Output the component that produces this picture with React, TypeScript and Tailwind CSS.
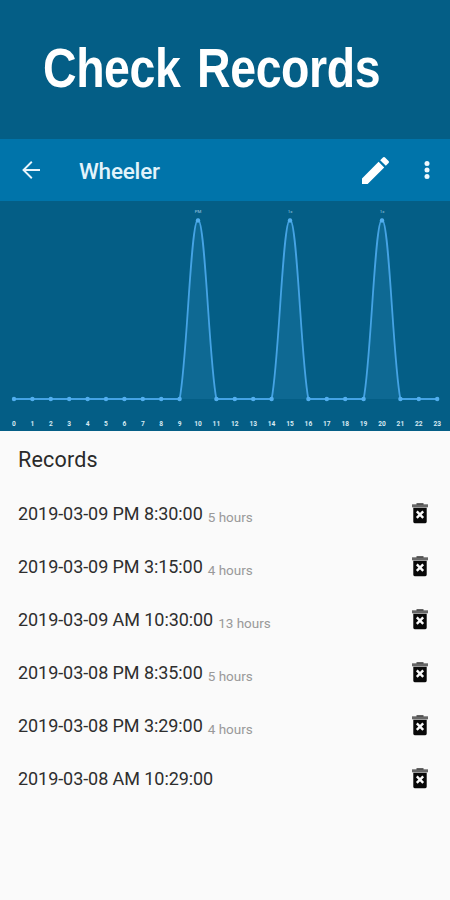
const records = [
  { time: "2019-03-09 PM 8:30:00", gap: "5 hours" },
  { time: "2019-03-09 PM 3:15:00", gap: "4 hours" },
  { time: "2019-03-09 AM 10:30:00", gap: "13 hours" },
  { time: "2019-03-08 PM 8:35:00", gap: "5 hours" },
  { time: "2019-03-08 PM 3:29:00", gap: "4 hours" },
  { time: "2019-03-08 AM 10:29:00", gap: "" },
];

const hours = Array.from({ length: 24 }, (_, i) => i);
const peaks = [10, 15, 20];
const BASE = 198;
const TOP = 18.5;
const STEP = 18.4;

const px = (hour: number) => 14 + hour * STEP;

function peakCurve(hour: number) {
  const x = px(hour);
  return (
    `L${x - STEP} ${BASE} C${x - 11} ${BASE - 36} ${x - 7.4} ${TOP} ${x} ${TOP} ` +
    `C${x + 7.4} ${TOP} ${x + 11} ${BASE - 36} ${x + STEP} ${BASE}`
  );
}

function Chart() {
  const line = `M${px(0)} ${BASE} ${peaks.map(peakCurve).join(" ")} L${px(23)} ${BASE}`;

  return (
    <svg viewBox="0 0 450 230" className="block h-[230px] w-full bg-[#045e86]">
      <path d={line} fill="#1e7ba8" fillOpacity="0.4" stroke="#45a3e4" strokeWidth="1.8" />
      {hours.map((hour) => (
        <g key={hour}>
          <circle cx={px(hour)} cy={peaks.includes(hour) ? TOP + 1 : BASE} r="2.2" fill="#52aeee" />
          <text x={px(hour)} y="224.6" textAnchor="middle" fontSize="6.6" fontWeight="700" fill="#d8eaf3">
            {hour}
          </text>
        </g>
      ))}
      {peaks.map((hour) => (
        <text key={hour} x={px(hour)} y="12.2" textAnchor="middle" fontSize="4.4" fontWeight="500" fill="#82b8d4">
          {hour === 10 ? "PM" : "1x"}
        </text>
      ))}
    </svg>
  );
}

function TrashIcon() {
  return (
    <svg viewBox="0 0 16 21" className="h-[21px] w-4">
      <path d="M4.5 .3h7v2h-7z" fill="#222" />
      <path d="M0 1.3h16v3H0z" fill="#666" />
      <path d="M1.3 4.8h13.4v14a1.4 1.4 0 0 1-1.4 1.4H2.7a1.4 1.4 0 0 1-1.4-1.4z" fill="#080808" />
      <path d="M4.8 8.4l6.4 6.4M11.2 8.4l-6.4 6.4" stroke="#fafafa" strokeWidth="2.4" />
    </svg>
  );
}

export default function App() {
  return (
    <div className="flex h-[900px] w-[450px] flex-col overflow-hidden bg-[#fafafa] font-['Roboto',sans-serif]">
      <header className="h-[139px] bg-[#045e86] pt-[38px] pl-[43px]">
        <h1 className="origin-left scale-x-[0.845] font-['Liberation_Sans',sans-serif] text-[55px] leading-[60px] font-bold tracking-[-0.5px] whitespace-nowrap text-white [word-spacing:5px]">
          Check Records
        </h1>
      </header>

      <nav className="flex h-[62px] items-center bg-[#0074aa] pr-5 pl-[22px] text-white">
        <svg viewBox="0 0 18 18" className="h-[18px] w-[18px]" fill="none" stroke="#e8f5fc" strokeWidth="1.9">
          <path d="M18 9H1.5M9.8 .8L1.5 9l8.3 8.2" />
        </svg>
        <span className="mt-[3px] ml-[39px] flex-1 text-[22.5px] font-medium tracking-[-0.2px] text-[#e2f3fb]">
          Wheeler
        </span>
        <svg viewBox="3 3 18 18" className="mr-[35px] h-[27px] w-[27px]" fill="#fff">
          <path d="M3 17.25V21h3.75L17.81 9.94l-3.75-3.75L3 17.25zM20.71 7.04c.39-.39.39-1.02 0-1.41l-2.34-2.34c-.39-.39-1.02-.39-1.41 0l-1.83 1.83 3.75 3.75 1.83-1.83z" />
        </svg>
        <svg viewBox="0 0 6 20" className="h-5 w-1.5" fill="#eef8fd">
          <circle cx="3" cy="3.4" r="2.5" />
          <circle cx="3" cy="10" r="2.5" />
          <circle cx="3" cy="16.6" r="2.5" />
        </svg>
      </nav>

      <Chart />

      <main className="pr-[22px] pl-[18px]">
        <h2 className="pt-[13px] text-[21.5px] leading-[32px] tracking-[0.2px] text-[#2a2a2a]">Records</h2>
        <ul className="mt-[11px]">
          {records.map((record) => (
            <li key={record.time} className="flex h-[53px] items-center">
              <span className="text-[18px] tracking-[-0.07px] text-[#2e2e2e]">{record.time}</span>
              <span className="mt-2 ml-[5px] flex-1 text-[13.5px] text-[#999]">{record.gap}</span>
              <TrashIcon />
            </li>
          ))}
        </ul>
      </main>
    </div>
  );
}
